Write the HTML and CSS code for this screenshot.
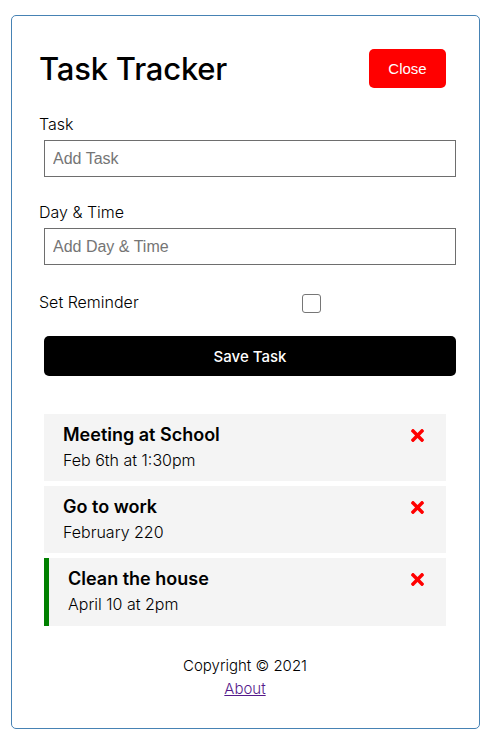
FILE: index.html
```html
<!DOCTYPE html>
<html lang="en">
<head>
<meta charset="utf-8">
<title>Task Tracker</title>
<link rel="stylesheet" href="styles.css">
</head>
<body>
<div class="container">
  <header class="header">
    <h1>Task Tracker</h1>
    <button class="btn btn-close">Close</button>
  </header>
  <form class="add-form">
    <div class="form-control">
      <label>Task</label>
      <input type="text" placeholder="Add Task">
    </div>
    <div class="form-control">
      <label>Day &amp; Time</label>
      <input type="text" placeholder="Add Day &amp; Time">
    </div>
    <div class="form-control form-control-check">
      <label>Set Reminder</label>
      <div class="check-wrap"><input type="checkbox" class="check"></div>
    </div>
    <button type="button" class="btn btn-block">Save Task</button>
  </form>
  <div class="tasks">
    <div class="task">
      <h3>Meeting at School <svg class="del" viewBox="0 0 352 512"><path d="M242.72 256l100.07-100.07c12.28-12.28 12.28-32.19 0-44.48l-22.24-22.24c-12.28-12.28-32.19-12.28-44.48 0L176 189.28 75.93 89.21c-12.28-12.28-32.19-12.28-44.48 0L9.21 111.45c-12.28 12.28-12.28 32.19 0 44.48L109.28 256 9.21 356.07c-12.28 12.28-12.28 32.19 0 44.48l22.24 22.24c12.28 12.28 32.2 12.28 44.48 0L176 322.72l100.07 100.07c12.28 12.28 32.2 12.28 44.48 0l22.24-22.24c12.28-12.28 12.28-32.19 0-44.48L242.72 256z"/></svg></h3>
      <p>Feb 6th at 1:30pm</p>
    </div>
    <div class="task">
      <h3>Go to work <svg class="del" viewBox="0 0 352 512"><path d="M242.72 256l100.07-100.07c12.28-12.28 12.28-32.19 0-44.48l-22.24-22.24c-12.28-12.28-32.19-12.28-44.48 0L176 189.28 75.93 89.21c-12.28-12.28-32.19-12.28-44.48 0L9.21 111.45c-12.28 12.28-12.28 32.19 0 44.48L109.28 256 9.21 356.07c-12.28 12.28-12.28 32.19 0 44.48l22.24 22.24c12.28 12.28 32.2 12.28 44.48 0L176 322.72l100.07 100.07c12.28 12.28 32.2 12.28 44.48 0l22.24-22.24c12.28-12.28 12.28-32.19 0-44.48L242.72 256z"/></svg></h3>
      <p>February 220</p>
    </div>
    <div class="task reminder">
      <h3>Clean the house <svg class="del" viewBox="0 0 352 512"><path d="M242.72 256l100.07-100.07c12.28-12.28 12.28-32.19 0-44.48l-22.24-22.24c-12.28-12.28-32.19-12.28-44.48 0L176 189.28 75.93 89.21c-12.28-12.28-32.19-12.28-44.48 0L9.21 111.45c-12.28 12.28-12.28 32.19 0 44.48L109.28 256 9.21 356.07c-12.28 12.28-12.28 32.19 0 44.48l22.24 22.24c12.28 12.28 32.2 12.28 44.48 0L176 322.72l100.07 100.07c12.28 12.28 32.2 12.28 44.48 0l22.24-22.24c12.28-12.28 12.28-32.19 0-44.48L242.72 256z"/></svg></h3>
      <p>April 10 at 2pm</p>
    </div>
  </div>
  <footer class="footer">
    <p>Copyright &copy; 2021</p>
    <a href="#about">About</a>
  </footer>
</div>
</body>
</html>
```
FILE: styles.css
```css
* { box-sizing: border-box; }
body {
  margin: 0;
  font-family: Inter, "Noto Sans", sans-serif;
  font-weight: 300;
  color: #000;
  background: #fff;
}
.container {
  display: flex;
  flex-direction: column;
  width: 469px;
  margin: 15px 8px 0 11px;
  border: 1px solid #4682b4;
  border-radius: 5px;
  padding: 28px 28px 28px 27px;
}
.header {
  display: flex;
  justify-content: space-between;
  align-items: center;
  height: 49px;
}
.header h1 {
  margin: 0;
  font-size: 31px;
  font-weight: 500;
  line-height: 1;
  letter-spacing: -0.2px;
}
.btn {
  border: none;
  border-radius: 5px;
  color: #fff;
  cursor: pointer;
}
.btn-close {
  margin: 5px;
  width: 77px;
  height: 39px;
  background: #ff0000;
  font: 15px "Liberation Sans", Arial, sans-serif;
}
.add-form {
  display: flex;
  flex-direction: column;
}
.form-control {
  display: flex;
  flex-direction: column;
  margin-top: 20px;
}
.form-control + .form-control { margin-top: 19px; }
.form-control label {
  display: block;
  font-size: 16px;
  line-height: 22px;
}
.form-control input[type="text"] {
  display: block;
  width: 100%;
  height: 37px;
  margin: 5px;
  padding: 3px 8px;
  border: 1px solid #6e6e6e;
  font: 16px "Liberation Sans", Arial, sans-serif;
  color: #000;
}
.form-control input::placeholder { color: #757575; }
.form-control-check {
  flex-direction: row;
  align-items: flex-start;
  margin-bottom: 18px;
}
.form-control.form-control-check { margin-top: 21px; }
.form-control-check label { flex: 1; }
.check-wrap {
  flex: 2;
  display: flex;
  justify-content: center;
}
.check {
  appearance: none;
  margin: 3px 4px 0 0;
  width: 19px;
  height: 19px;
  border: 1px solid #767676;
  border-radius: 3px;
  background: #fff;
}
.btn-block {
  display: block;
  width: 100%;
  height: 40px;
  margin: 5px;
  background: #000;
  font: 500 15px Inter, sans-serif;
}
.tasks {
  display: flex;
  flex-direction: column;
  gap: 5px;
  margin: 33px 5px 0;
}
.task {
  background: #f4f4f4;
  padding: 9px 19px;
  height: 67px;
}
.task.reminder { height: 68px; border-left: 5px solid green; }
.task h3 {
  margin: 0 0 2px;
  display: flex;
  justify-content: space-between;
  align-items: center;
  font-size: 18px;
  font-weight: 600;
  line-height: 24px;
}
.task p {
  margin: 0;
  font-size: 16px;
  line-height: 23px;
}
.del {
  width: 13px;
  height: 19px;
  margin-right: 3px;
  fill: #ff0000;
}
.footer {
  margin-top: 28px;
  text-align: center;
  font-size: 15px;
  line-height: 23px;
}
.footer p { margin: 0; }
.footer a { color: #551a8b; }
```
